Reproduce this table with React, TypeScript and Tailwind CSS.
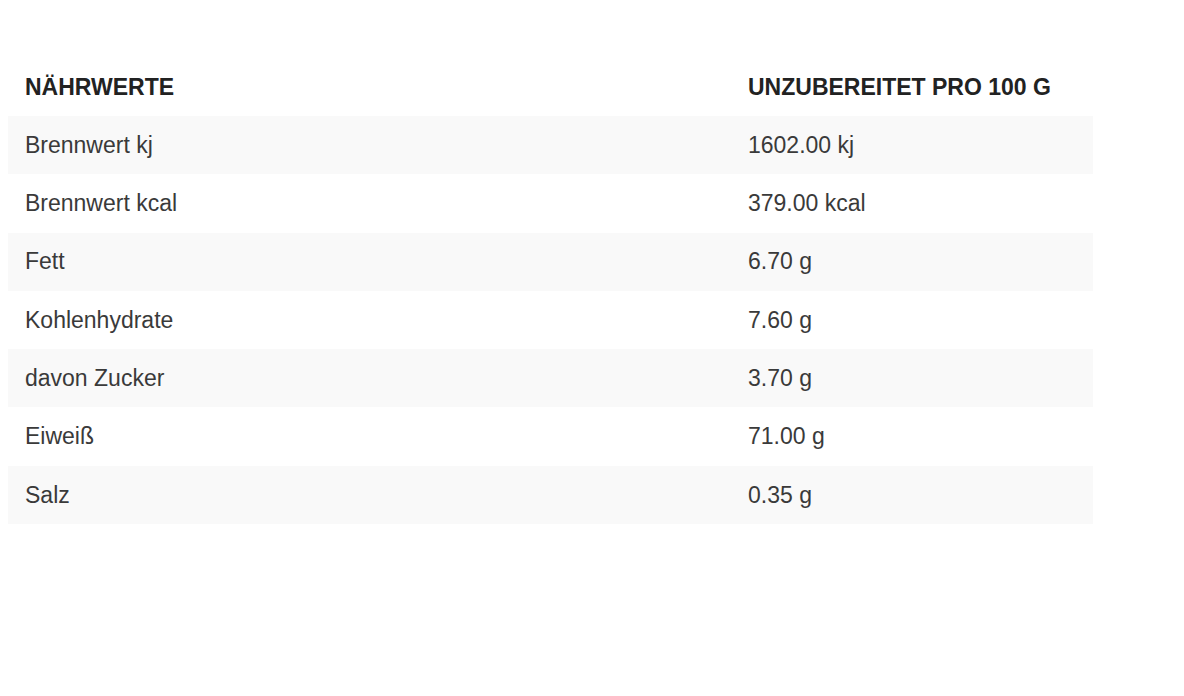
const rows: [string, string][] = [
  ["Brennwert kj", "1602.00 kj"],
  ["Brennwert kcal", "379.00 kcal"],
  ["Fett", "6.70 g"],
  ["Kohlenhydrate", "7.60 g"],
  ["davon Zucker", "3.70 g"],
  ["Eiweiß", "71.00 g"],
  ["Salz", "0.35 g"],
];

export default function App() {
  return (
    <div
      className="min-h-[696px] w-[1184px] bg-white pt-[58px] pl-2"
      style={{ fontFamily: '"Liberation Sans", Arial, sans-serif' }}
    >
      <div className="w-[1085px] text-[23px]">
        <div className="grid h-[58px] grid-cols-[723px_1fr] items-center font-bold text-[#222]">
          <div className="pl-[17px]">NÄHRWERTE</div>
          <div className="pl-[17px]">UNZUBEREITET PRO 100 G</div>
        </div>
        {rows.map(([name, value], i) => (
          <div
            key={name}
            className={`grid h-[58.3px] grid-cols-[723px_1fr] items-center text-[#3a3a3a] ${
              i % 2 === 0 ? "bg-[#f9f9f9]" : "bg-white"
            }`}
          >
            <div className="pl-[17px]">{name}</div>
            <div className="pl-[17px]">{value}</div>
          </div>
        ))}
      </div>
    </div>
  );
}
